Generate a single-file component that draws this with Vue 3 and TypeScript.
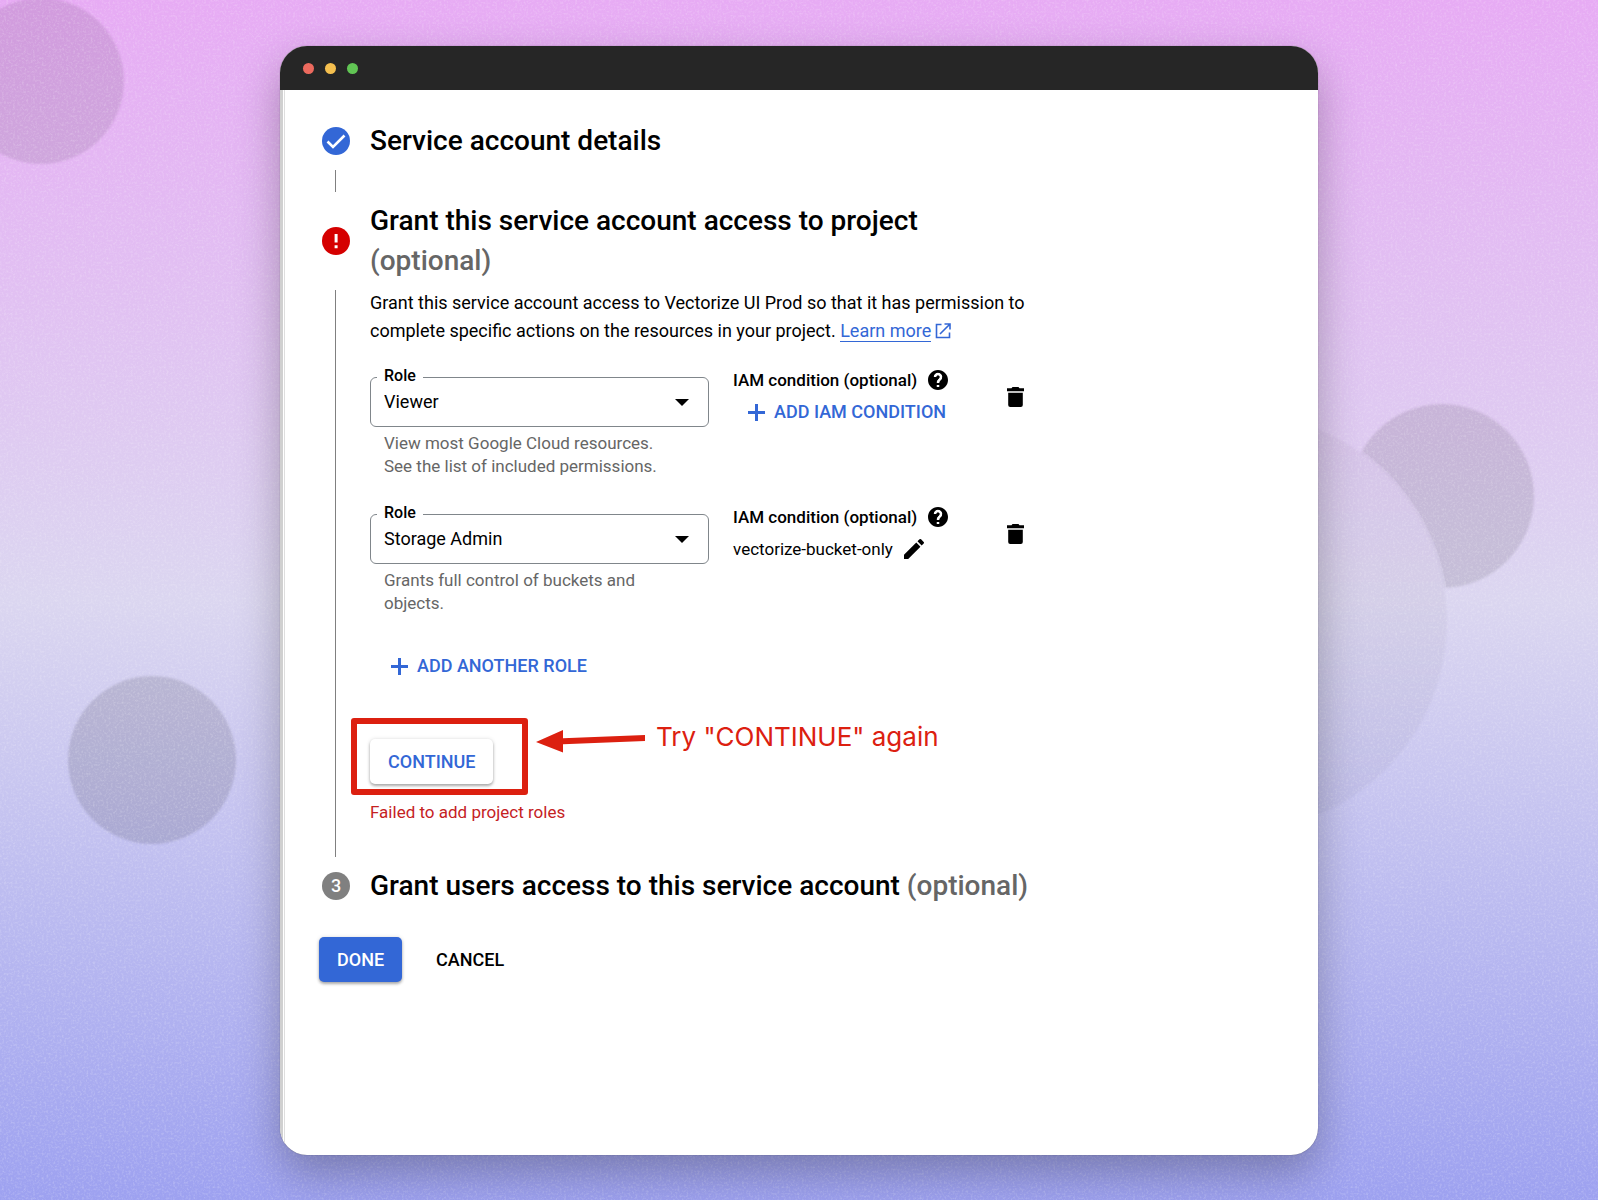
<script setup lang="ts">
import { reactive } from 'vue'

interface RoleBinding {
  id: string
  role: string
  hint: string
  condition: string | null
}

const roleOptions: string[] = ['Viewer', 'Storage Admin']

const bindings = reactive<RoleBinding[]>([
  {
    id: 'role-viewer',
    role: 'Viewer',
    hint: 'View most Google Cloud resources. See the list of included permissions.',
    condition: null,
  },
  {
    id: 'role-storage',
    role: 'Storage Admin',
    hint: 'Grants full control of buckets and objects.',
    condition: 'vectorize-bucket-only',
  },
])
</script>

<template>
  <div class="backdrop">
    <svg class="scenery" viewBox="0 0 1598 1200" preserveAspectRatio="xMidYMid slice" aria-hidden="true">
      <defs>
        <linearGradient id="sky" x1="0" y1="0" x2="0" y2="1200" gradientUnits="userSpaceOnUse">
          <stop offset="0" stop-color="#e7abf4" />
          <stop offset="0.5" stop-color="#dbd6f0" />
          <stop offset="1" stop-color="#9da1f0" />
        </linearGradient>
        <filter id="soft"><feGaussianBlur stdDeviation="1" /></filter>
        <filter id="grain" x="0" y="0" width="100%" height="100%">
          <feTurbulence type="fractalNoise" baseFrequency="0.45" numOctaves="2" seed="4" />
          <feColorMatrix values="0 0 0 0 1  0 0 0 0 1  0 0 0 0 1  1.6 0 0 0 -0.72" />
        </filter>
      </defs>
      <rect width="1598" height="1200" fill="url(#sky)" />
      <g filter="url(#soft)">
        <circle cx="41" cy="81" r="83" fill="#000" fill-opacity="0.09" />
        <circle cx="152" cy="760" r="84" fill="#000" fill-opacity="0.12" />
        <circle cx="1442" cy="496" r="92" fill="#000" fill-opacity="0.1" />
        <circle cx="1238" cy="622" r="209" fill="url(#sky)" />
        <circle cx="1238" cy="622" r="209" fill="#000" fill-opacity="0.03" />
      </g>
      <rect width="1598" height="1200" filter="url(#grain)" opacity="0.3" />
    </svg>

    <main class="window">
      <header class="titlebar">
        <span class="light red"></span>
        <span class="light yellow"></span>
        <span class="light green"></span>
      </header>

      <div class="page">
        <section class="step">
          <svg class="badge" viewBox="0 0 28 28" aria-hidden="true">
            <circle cx="14" cy="14" r="14" fill="#3367d6" />
            <path d="M5.5 14.5l5.5 5.500L22.500 8.500" fill="none" stroke="#fff" stroke-width="2.600" />
          </svg>
          <h2>Service account details</h2>
          <div class="rail short"></div>
        </section>

        <section class="step">
          <svg class="badge" viewBox="0 0 28 28" aria-hidden="true">
            <circle cx="14" cy="14" r="14" fill="#d50000" />
            <path d="M12.600 7h3v8.500h-3zM12.600 18.200h3v3h-3z" fill="#fff" />
          </svg>
          <h2>Grant this service account access to project <span class="optional">(optional)</span></h2>
          <div class="rail"></div>
          <div class="body">
            <p class="intro">
              Grant this service account access to Vectorize UI Prod so that it has permission to
              complete specific actions on the resources in your project.
              <a href="#" class="learn">Learn more</a><svg class="external" viewBox="0 0 16 16" width="16" height="16" aria-hidden="true"><path d="M6.500 1.500H1.500v13h13V9.500M9.500 1h5.500v5.500M15 1L5 11" fill="none" stroke="#3367d6" stroke-width="1.600" /></svg>
            </p>

            <div v-for="binding in bindings" :key="binding.id" class="binding">
              <div class="role">
                <div class="field">
                  <label :for="binding.id">Role</label>
                  <select :id="binding.id" v-model="binding.role">
                    <option v-for="option in roleOptions" :key="option">{{ option }}</option>
                  </select>
                  <svg class="caret" viewBox="0 0 14 7" width="14" height="7" aria-hidden="true"><path d="M0 0h14L7 7z" /></svg>
                </div>
                <p class="hint">{{ binding.hint }}</p>
              </div>
              <div class="iam">
                <div class="iam-title">
                  <span>IAM condition (optional)</span>
                  <button type="button" class="icon" aria-label="Help">
                    <svg viewBox="2 2 20 20" width="20" height="20"><path d="M12 2C6.480 2 2 6.480 2 12s4.480 10 10 10 10-4.480 10-10S17.520 2 12 2zm1 17h-2v-2h2v2zm2.070-7.750l-.9.920C13.450 12.900 13 13.500 13 15h-2v-.5c0-1.100.450-2.100 1.170-2.830l1.240-1.260c.370-.360.590-.860.590-1.410 0-1.100-.9-2-2-2s-2 .9-2 2H8c0-2.210 1.790-4 4-4s4 1.790 4 4c0 .880-.360 1.680-.930 2.250z" stroke="#fff" stroke-width="0" /><path d="M9 9a3 3 0 1 1 4.800 2.400C12.600 12.400 12 13 12 15M12 17v2" fill="none" stroke="#fff" stroke-width="2.500" /></svg>
                  </button>
                </div>
                <div v-if="binding.condition" class="condition">
                  <span>{{ binding.condition }}</span>
                  <button type="button" class="icon" aria-label="Edit condition">
                    <svg viewBox="3 3 18 18" width="20" height="20"><path d="M3 17.250V21h3.750L17.810 9.940l-3.750-3.750L3 17.250zM20.710 7.040a1 1 0 0 0 0-1.410l-2.340-2.340a1 1 0 0 0-1.410 0l-1.830 1.830 3.750 3.750 1.830-1.830z" /></svg>
                  </button>
                </div>
                <button v-else type="button" class="text-button">
                  <svg viewBox="0 0 17 17" width="17" height="17" aria-hidden="true"><path d="M7 0h3v7h7v3h-7v7H7v-7H0V7h7z" /></svg>
                  ADD IAM CONDITION
                </button>
              </div>
              <button type="button" class="icon trash" aria-label="Delete role">
                <svg viewBox="0 0 17 20" width="17" height="20"><path d="M5.500 0h6l1 1.200H17v3H0v-3h4.500zM1.200 5.800h14.600V18a2 2 0 0 1-2 2H3.200a2 2 0 0 1-2-2z" /></svg>
              </button>
            </div>

            <button type="button" class="text-button another">
              <svg viewBox="0 0 17 17" width="17" height="17" aria-hidden="true"><path d="M7 0h3v7h7v3h-7v7H7v-7H0V7h7z" /></svg>
              ADD ANOTHER ROLE
            </button>

            <div class="proceed">
              <button type="button" class="raised">CONTINUE</button>
              <div class="highlight"></div>
              <div class="callout">
                <svg viewBox="0 0 110 32" width="110" height="32" aria-hidden="true">
                  <path d="M0 21L27 9v8.200L109 14v6L27 23.200V31.500z" fill="#dc2010" />
                </svg>
                <span>Try "CONTINUE" again</span>
              </div>
            </div>
            <p class="error" role="alert">Failed to add project roles</p>
          </div>
        </section>

        <section class="step">
          <span class="badge number">3</span>
          <h2>Grant users access to this service account <span class="optional">(optional)</span></h2>
        </section>

        <div class="actions">
          <button type="button" class="raised primary">DONE</button>
          <button type="button" class="raised flat">CANCEL</button>
        </div>
      </div>
    </main>
  </div>
</template>

<style>
body {
  margin: 0;
}
</style>

<style scoped>
* {
  box-sizing: border-box;
}

.backdrop {
  position: relative;
  display: flex;
  min-height: 100vh;
  padding: 46px 280px 45px;
  font-family: Roboto, "Liberation Sans", sans-serif;
  font-size: 18px;
  line-height: 28px;
  color: #000;
}

.scenery {
  position: absolute;
  inset: 0;
  width: 100%;
  height: 100%;
}

.window {
  position: relative;
  flex: 1;
  min-width: 0;
  display: flex;
  flex-direction: column;
  overflow: hidden;
  border-radius: 27px;
  background: #fff;
  box-shadow: 0 0 1px rgba(0, 0, 0, 0.5), 0 18px 44px rgba(0, 0, 0, 0.28);
}

.titlebar {
  display: flex;
  align-items: center;
  gap: 11px;
  height: 44px;
  padding-left: 23px;
  background: #262626;
}

.light {
  width: 11px;
  height: 11px;
  border-radius: 50%;
}

.red { background: #ec6a5e; }
.yellow { background: #f4bf4f; }
.green { background: #61c554; }

.page {
  flex: 1;
  padding: 31px 39px;
  border-left: 3px solid #d0d0d0;
  box-shadow: inset 1px 0 #fff, inset 2px 0 #dedede;
}

.step {
  display: grid;
  grid-template-columns: 28px minmax(0, 672px);
  column-gap: 20px;
  align-items: center;
}

.badge {
  width: 28px;
  height: 28px;
}

.number {
  border-radius: 50%;
  background: #808080;
  color: #fff;
  font-weight: 500;
  text-align: center;
}

h2 {
  margin: 0;
  font-size: 28px;
  line-height: 40px;
  font-weight: 500;
}

.optional {
  color: #666;
}

.rail {
  align-self: stretch;
  width: 1px;
  margin: 9px 0 9px 13px;
  background: #808080;
}

.short {
  height: 22px;
}

.body {
  padding: 8px 0 40px;
}

p {
  margin: 0;
}

.learn {
  border-bottom: 1px solid;
  color: #3367d6;
  text-decoration: none;
}

.external {
  margin-left: 4px;
  vertical-align: -2px;
}

.binding {
  display: grid;
  grid-template-columns: 339px 1fr auto;
  column-gap: 24px;
  margin-top: 32px;
}

.binding + .binding {
  margin-top: 36px;
}

.field {
  position: relative;
}

.field label {
  position: absolute;
  top: -12px;
  left: 7px;
  padding: 0 7px;
  background: #fff;
  font-size: 16px;
  line-height: 22px;
  font-weight: 500;
}

select {
  display: block;
  width: 100%;
  height: 50px;
  padding: 0 13px;
  border: 1px solid #80868b;
  border-radius: 6px;
  appearance: none;
  background: #fff;
  color: #000;
  font: inherit;
}

.caret {
  position: absolute;
  right: 20px;
  top: 22px;
  pointer-events: none;
}

.hint {
  margin: 5px 40px 0 14px;
  color: #666;
  font-size: 17px;
  line-height: 23px;
}

button {
  border: 0;
  padding: 0;
  background: none;
  color: inherit;
  font: inherit;
}

svg {
  flex: none;
}

.icon {
  display: flex;
}

.iam {
  margin-top: -13px;
  font-size: 17px;
}

.iam-title,
.condition {
  display: flex;
  align-items: center;
  gap: 11px;
  height: 32px;
}

.iam-title {
  font-weight: 500;
}

.text-button {
  display: flex;
  align-items: center;
  gap: 9px;
  height: 32px;
  margin-left: 15px;
  color: #3367d6;
  fill: #3367d6;
  font-size: 18px;
  font-weight: 500;
}

.trash {
  align-self: start;
  margin: 10px 18px 0 0;
}

.another {
  margin: 35px 0 0 21px;
}

.proceed {
  position: relative;
  margin: 57px 0 14px;
}

.raised {
  display: block;
  height: 45px;
  padding: 0 18px;
  border-radius: 5px;
  background: #fff;
  color: #3367d6;
  font-weight: 500;
  box-shadow: 0 2px 3px rgba(0, 0, 0, 0.3), 0 0 4px rgba(0, 0, 0, 0.12);
}

.highlight {
  position: absolute;
  top: -21px;
  left: -19px;
  width: 177px;
  height: 77px;
  border: 6px solid #dc2010;
  border-radius: 3px;
  pointer-events: none;
}

.callout {
  position: absolute;
  top: -19px;
  left: 166px;
  display: flex;
  align-items: center;
  gap: 10px;
  height: 34px;
  color: #dc2010;
  font-family: Inter, Roboto, sans-serif;
  font-size: 26px;
  white-space: nowrap;
}

.error {
  color: #c5221f;
  font-size: 17px;
}

.actions {
  display: flex;
  gap: 16px;
  margin: 31px 0 0 -3px;
}

.primary {
  background: #3367d6;
  color: #fff;
}

.flat {
  color: #000;
  box-shadow: none;
}
</style>
